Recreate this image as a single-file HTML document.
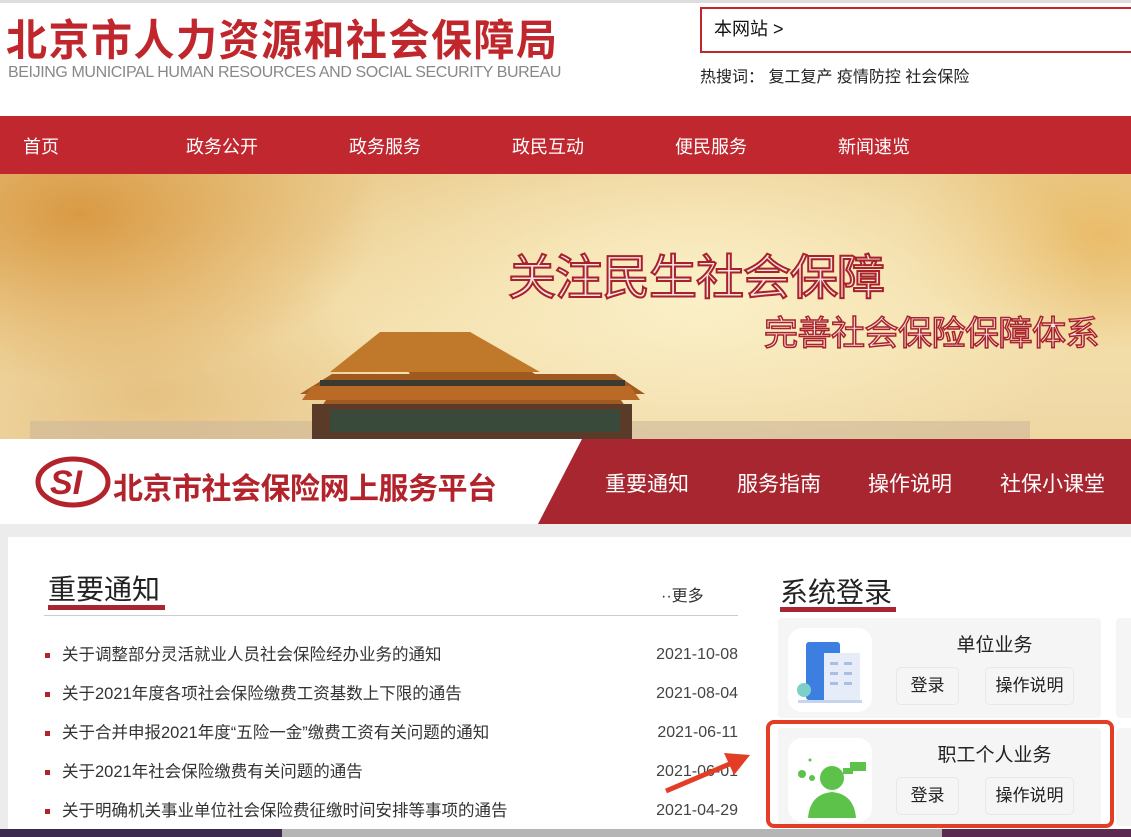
<!DOCTYPE html>
<html><head><meta charset="utf-8"><style>
*{margin:0;padding:0;box-sizing:border-box}
body{width:1131px;height:837px;overflow:hidden;background:#ececec;font-family:"Liberation Sans","Noto Sans CJK SC",sans-serif;position:relative}
.abs{position:absolute}
#hdr{left:0;top:0;width:1131px;height:116px;background:#fff;border-top:3px solid #ddd}
#nav{left:0;top:116px;width:1131px;height:58px;background:#c1272f;color:#fff;font-size:18px}
#nav span{position:absolute;top:17px}
#banner{left:0;top:174px;width:1131px;height:265px;overflow:hidden;
background:radial-gradient(ellipse 400px 200px at 700px 120px,#fbf0c8,transparent),radial-gradient(ellipse 300px 170px at 80px 40px,#d99a44,transparent),radial-gradient(ellipse 200px 120px at 1100px 60px,#e9bc6a,transparent),radial-gradient(ellipse 250px 140px at 150px 220px,#e6c282,transparent),linear-gradient(180deg,#ebcd90,#f3deaa 60%,#efd7a4)}
#bar{left:0;top:439px;width:1131px;height:85px;background:#fff}
.t{color:#fff;font-size:21px;top:29px;position:absolute}
#panel{left:8px;top:537px;width:1123px;height:300px;background:#fff}
.li{position:absolute;left:62px;font-size:16.5px;line-height:20px;color:#333}
.li:before{content:"";position:absolute;left:-17px;top:8px;width:5px;height:5px;background:#b3232c}
.dt{position:absolute;right:393px;font-size:16px;line-height:20px;color:#444}
.card{position:absolute;background:#f5f5f5;border-radius:4px}
.ic{position:absolute;left:10px;top:10px;width:84px;height:84px;background:#fff;border-radius:14px}
.btn{position:absolute;top:49px;height:38px;border:1px solid #e8e8e8;border-radius:5px;font-size:17px;color:#222;text-align:center;line-height:36px;background:#f5f5f5}
.ct{position:absolute;width:100%;padding-left:110px;text-align:center;top:12px;font-size:19px;color:#222}
</style></head><body>
<div id="hdr" class="abs">
 <div class="abs" style="left:6px;top:2px;font-size:41px;color:#c0272d;font-weight:bold;letter-spacing:1.5px;transform:scaleY(1.05);transform-origin:top left">北京市人力资源和社会保障局</div>
 <div class="abs" style="left:8px;top:61px;font-size:16px;color:#888;letter-spacing:-0.4px">BEIJING MUNICIPAL HUMAN RESOURCES AND SOCIAL SECURITY BUREAU</div>
 <div class="abs" style="left:700px;top:4px;width:440px;height:46px;border:2px solid #c0272d;border-right:none;font-size:18px;padding:6px 12px;color:#111">本网站 &gt;</div>
 <div class="abs" style="left:700px;top:60px;font-size:16px;color:#222">热搜词：&nbsp;复工复产 疫情防控 社会保险</div>
</div>
<div id="nav" class="abs"><span style="left:23px">首页</span><span style="left:186px">政务公开</span><span style="left:349px">政务服务</span><span style="left:512px">政民互动</span><span style="left:675px">便民服务</span><span style="left:838px">新闻速览</span></div>
<div id="banner" class="abs">
 <div class="abs" style="left:508px;top:64px;font-size:48px;color:#f7e3e3;-webkit-text-stroke:2px #a8222a;letter-spacing:-1px">关注民生社会保障</div>
 <div class="abs" style="left:764px;top:132px;font-size:34px;color:#f7e3e3;-webkit-text-stroke:1.5px #a8222a;letter-spacing:-0.5px">完善社会保险保障体系</div>
 <svg class="abs" style="left:0;top:150px" width="1131" height="115">
  <rect x="30" y="97" width="1000" height="18" fill="#cdb89a" opacity=".6"/>
  <polygon points="410,50 332,50 300,70 330,70 322,82 625,82 617,70 645,70 615,50 535,50 470,8 380,8" fill="#a05a20"/>
  <polygon points="380,8 470,8 540,48 330,48" fill="#c0782a"/>
  <polygon points="312,62 630,62 640,76 302,76" fill="#b86a26"/>
  <rect x="320" y="56" width="305" height="6" fill="#3a3a30"/>
  <rect x="312" y="80" width="320" height="35" fill="#5a3a28"/>
  <rect x="330" y="86" width="290" height="22" fill="#3a4a3a"/>
 </svg>
</div>
<div id="bar" class="abs">
 <svg class="abs" style="left:33px;top:17px" width="80" height="52"><ellipse cx="40" cy="26" rx="35" ry="23" fill="none" stroke="#b3232c" stroke-width="5"/><text x="17" y="38" font-size="34" font-style="italic" font-weight="bold" fill="#b3232c" font-family="Liberation Sans">SI</text></svg>
 <div class="abs" style="left:113px;top:25px;font-size:30px;font-weight:bold;color:#b3232c;letter-spacing:-0.5px">北京市社会保险网上服务平台</div>
 <svg class="abs" style="left:0;top:0" width="1131" height="85"><polygon points="582,0 1131,0 1131,85 538,85" fill="#a8262f"/></svg>
 <span class="t" style="left:605px">重要通知</span><span class="t" style="left:737px">服务指南</span><span class="t" style="left:868px">操作说明</span><span class="t" style="left:1000px">社保小课堂</span>
</div>
<div id="panel" class="abs"></div>
<div class="abs" style="left:48px;top:568px;font-size:28px;color:#222">重要通知</div>
<div class="abs" style="left:48px;top:605px;width:117px;height:5px;background:#a8262f"></div>
<div class="abs" style="left:44px;top:615px;width:694px;height:1px;background:#ccc"></div>
<div class="abs" style="left:661px;top:582px;font-size:16px;color:#333">··更多</div>
<div class="li" style="top:645px">关于调整部分灵活就业人员社会保险经办业务的通知</div><div class="dt" style="top:645px">2021-10-08</div>
<div class="li" style="top:684px">关于2021年度各项社会保险缴费工资基数上下限的通告</div><div class="dt" style="top:684px">2021-08-04</div>
<div class="li" style="top:723px">关于合并申报2021年度“五险一金”缴费工资有关问题的通知</div><div class="dt" style="top:723px">2021-06-11</div>
<div class="li" style="top:762px">关于2021年社会保险缴费有关问题的通告</div><div class="dt" style="top:762px">2021-06-01</div>
<div class="li" style="top:801px">关于明确机关事业单位社会保险费征缴时间安排等事项的通告</div><div class="dt" style="top:801px">2021-04-29</div>
<div class="abs" style="left:780px;top:571px;font-size:28px;color:#222">系统登录</div>
<div class="abs" style="left:780px;top:607px;width:116px;height:5px;background:#a8262f"></div>
<div class="card" style="left:778px;top:618px;width:323px;height:100px">
 <div class="ic"><svg width="84" height="84"><rect x="18" y="14" width="34" height="58" rx="3" fill="#3d7fe0"/><rect x="36" y="25" width="36" height="47" fill="#e6edf9"/><rect x="10" y="72" width="64" height="3" fill="#c6d4ee"/><circle cx="16" cy="62" r="7" fill="#7cd0c8"/><g fill="#a9bfe6"><rect x="42" y="34" width="8" height="3"/><rect x="56" y="34" width="8" height="3"/><rect x="42" y="44" width="8" height="3"/><rect x="56" y="44" width="8" height="3"/><rect x="42" y="54" width="8" height="3"/><rect x="56" y="54" width="8" height="3"/></g></svg></div>
 <div class="ct">单位业务</div>
 <div class="btn" style="left:118px;width:63px">登录</div><div class="btn" style="left:207px;width:89px">操作说明</div>
</div>
<div class="card" style="left:1116px;top:618px;width:30px;height:100px"></div>
<div class="card" style="left:778px;top:728px;width:323px;height:98px">
 <div class="ic"><svg width="84" height="84"><circle cx="44" cy="40" r="12" fill="#5cc24a"/><path d="M20 80 Q22 56 44 54 Q66 56 68 80Z" fill="#5cc24a"/><rect x="62" y="24" width="16" height="9" fill="#5cc24a"/><rect x="55" y="30" width="10" height="6" fill="#5cc24a"/><circle cx="14" cy="36" r="4" fill="#5cc24a"/><circle cx="24" cy="40" r="3" fill="#5cc24a"/><circle cx="22" cy="22" r="1.5" fill="#5cc24a"/></svg></div>
 <div class="ct">职工个人业务</div>
 <div class="btn" style="left:118px;width:63px">登录</div><div class="btn" style="left:207px;width:89px">操作说明</div>
</div>
<div class="card" style="left:1116px;top:728px;width:30px;height:98px"></div>
<div class="abs" style="left:766px;top:720px;width:348px;height:108px;border:4px solid #e33d25;border-radius:8px"></div>
<svg class="abs" style="left:660px;top:745px" width="100" height="55"><line x1="6" y1="46" x2="72" y2="18" stroke="#e33d25" stroke-width="5"/><polygon points="90,10 64,8 74,30" fill="#e33d25"/></svg>
<div class="abs" style="left:0;top:829px;width:282px;height:8px;background:#3b2a4d"></div>
<div class="abs" style="left:282px;top:829px;width:660px;height:8px;background:#b5b5b5"></div>
<div class="abs" style="left:942px;top:829px;width:189px;height:8px;background:#5a2a50"></div>
</body></html>
